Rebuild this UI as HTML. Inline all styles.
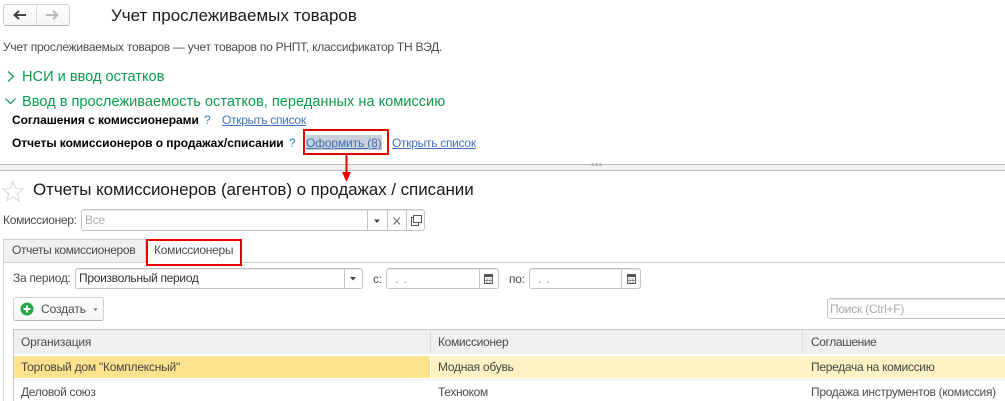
<!DOCTYPE html>
<html lang="ru"><head><meta charset="utf-8"><style>
html,body{margin:0;padding:0;background:#fff}
#p{position:relative;width:1005px;height:401px;overflow:hidden;background:#fff;font-family:"Liberation Sans",sans-serif;font-size:12px;color:#4b4b4b;filter:blur(.3px)}
.t{position:absolute;white-space:nowrap;line-height:16px;letter-spacing:-.28px}
.b{position:absolute;box-sizing:border-box}
.f{position:absolute;box-sizing:border-box;border:1px solid #c4c4c4;border-radius:3px;background:#fff;box-shadow:inset 0 1px 0 #e8e8e8}
.d{position:absolute;width:1px;background:#c4c4c4}
.g{color:#0c9b4e;font-size:14.600px;letter-spacing:0}
.l{color:#3f72b8;text-decoration:underline}
.k{color:#000;font-weight:bold;letter-spacing:-.05px}
.q{color:#2a86c8}
svg{position:absolute;overflow:visible}
</style></head><body><div id="p">
<div class="b" style="left:3px;top:4px;width:67px;height:22px;border:1px solid #d2d2d2;border-bottom-color:#b4b4b4;border-radius:3px;background:linear-gradient(#fff,#f4f4f4)"></div>
<div class="d" style="left:36px;top:5px;height:20px;background:#ddd"></div>
<svg style="left:0;top:0" width="80" height="30"><path d="M26 15H14.500M19 11L14.500 15L19 19" fill="none" stroke="#444" stroke-width="2"/><path d="M46 15H57.500M53 11L57.500 15L53 19" fill="none" stroke="#bbb" stroke-width="2"/></svg>
<div class="t" style="left:111px;top:5px;font-size:17px;line-height:22px;color:#1a1a1a;letter-spacing:0">Учет прослеживаемых товаров</div>
<div class="t" style="left:3px;top:39px;letter-spacing:-.25px">Учет прослеживаемых товаров — учет товаров по РНПТ, классификатор ТН ВЭД.</div>
<svg style="left:0;top:0" width="20" height="120"><path d="M8 71.500L13.500 76.500L8 81.500" fill="none" stroke="#0c9b4e" stroke-width="1.200"/><path d="M5.500 98.500L10.500 103.500L15.500 98.500" fill="none" stroke="#0c9b4e" stroke-width="1.200"/></svg>
<div class="t g" style="left:22px;top:69px">НСИ и ввод остатков</div>
<div class="t g" style="left:22px;top:94px">Ввод в прослеживаемость остатков, переданных на комиссию</div>
<div class="t k" style="left:12px;top:112px">Соглашения с комиссионерами</div>
<div class="t q" style="left:204px;top:112px">?</div>
<div class="t l" style="left:222px;top:112px">Открыть список</div>
<div class="t k" style="left:12px;top:135px">Отчеты комиссионеров о продажах/списании</div>
<div class="t q" style="left:289px;top:135px">?</div>
<div class="b" style="left:306px;top:135px;width:76px;height:15px;background:#c9d0da"></div>
<div class="t l" style="left:306px;top:135px;letter-spacing:-.15px">Оформить (8)</div>
<div class="b" style="left:303px;top:129px;width:86px;height:26px;border:2px solid #e60000"></div>
<div class="t l" style="left:392px;top:135px">Открыть список</div>
<div class="b" style="left:0;top:164px;width:1005px;height:7px;background:#f2f2f2;border-top:1px solid #bdbdbd;border-bottom:1px solid #bdbdbd"></div>
<div class="t" style="left:591px;top:161px;font-size:10px;line-height:10px;letter-spacing:.4px;color:#aaa">•••</div>
<svg style="left:335px;top:150px" width="24" height="36"><path d="M11.500 5V24" stroke="#f00000" stroke-width="2"/><path d="M7 22H16L11.500 32Z" fill="#f00000"/></svg>
<svg style="left:2px;top:180px" width="22" height="22"><path d="M11 1.500L13.700 8.500L21 9L15.300 13.700L17.200 21L11 17L4.800 21L6.700 13.700L1 9L8.300 8.500Z" fill="#fff" stroke="#d8d8d8" stroke-width="1"/></svg>
<div class="t" style="left:33px;top:179px;font-size:17px;line-height:22px;color:#1a1a1a;letter-spacing:-.06px">Отчеты комиссионеров (агентов) о продажах / списании</div>
<div class="t" style="left:3px;top:212px;letter-spacing:-.3px">Комиссионер:</div>
<div class="f" style="left:81px;top:209px;width:344px;height:22px"></div>
<div class="t" style="left:85px;top:212px;color:#b0b0b0">Все</div>
<div class="d" style="left:367px;top:210px;height:20px"></div><div class="d" style="left:387px;top:210px;height:20px"></div><div class="d" style="left:406px;top:210px;height:20px"></div>
<svg style="left:360px;top:205px" width="70" height="30"><path d="M14 14.500H20L17 18Z" fill="#444"/><path d="M33.500 12.500L40 19.500M40 12.500L33.500 19.500" stroke="#666" stroke-width="1"/><path d="M53 12.500H51.500V20.500H58.500V17.500M53.500 10.500H61.500V17.500H53.500Z" fill="none" stroke="#555"/></svg>
<div class="b" style="left:3px;top:239px;width:143px;height:24px;background:#f0f0f0;border:1px solid #cfcfcf;border-bottom:0"></div>
<div class="t" style="left:12px;top:242px;letter-spacing:-.35px">Отчеты комиссионеров</div>
<div class="b" style="left:3px;top:262px;width:1002px;height:1px;background:#cfcfcf"></div>
<div class="b" style="left:3px;top:262px;width:1px;height:139px;background:#d8d8d8"></div>
<div class="b" style="left:146px;top:239px;width:96px;height:27px;background:#fff;border:2px solid #e60000"></div>
<div class="t" style="left:154px;top:242px">Комиссионеры</div>
<div class="t" style="left:13px;top:270px;letter-spacing:-.3px">За период:</div>
<div class="f" style="left:75px;top:268px;width:288px;height:21px"></div>
<div class="d" style="left:344px;top:269px;height:19px"></div>
<div class="t" style="left:79px;top:270px;color:#333;letter-spacing:-.3px">Произвольный период</div>
<svg style="left:0;top:260px" width="1005" height="30"><path d="M350 17H356L353 20.500Z" fill="#444"/></svg>
<div class="t" style="left:373px;top:271px">с:</div>
<div class="f" style="left:386px;top:268px;width:113px;height:21px"></div>
<div class="d" style="left:479px;top:269px;height:19px"></div>
<div class="t" style="left:395px;top:271px;letter-spacing:1px;color:#888">. .</div>
<div class="t" style="left:509px;top:271px">по:</div>
<div class="f" style="left:529px;top:268px;width:112px;height:21px"></div>
<div class="d" style="left:621px;top:269px;height:19px"></div>
<div class="t" style="left:538px;top:271px;letter-spacing:1px;color:#888">. .</div>
<svg style="left:0;top:260px" width="1005" height="30"><g fill="#fff" stroke="#555"><rect x="484.500" y="14.500" width="8" height="9"/><rect x="627.500" y="14.500" width="8" height="9"/></g><path d="M484 14H493V17H484ZM627 14H636V17H627Z" fill="#555"/><path d="M487 18V23M490 18V23M484.500 20.500H492.500M630 18V23M633 18V23M627.500 20.500H635.500" stroke="#777" stroke-width=".800"/></svg>
<div class="b" style="left:13px;top:297px;width:91px;height:24px;border:1px solid #d2d2d2;border-bottom-color:#b4b4b4;border-radius:3px;background:linear-gradient(#fff,#f5f5f5)"></div>
<svg style="left:0;top:295px" width="110" height="30"><circle cx="27" cy="14" r="6.500" fill="#28a745"/><path d="M27 10.500V17.500M23.500 14H30.500" stroke="#fff" stroke-width="2"/><path d="M93.500 13.500H97.500L95.500 16Z" fill="#666"/></svg>
<div class="t" style="left:41px;top:301px;letter-spacing:-.1px">Создать</div>
<div class="f" style="left:827px;top:298px;width:190px;height:21px"></div>
<div class="t" style="left:830px;top:301px;color:#aaa;letter-spacing:-.25px">Поиск (Ctrl+F)</div>
<div class="b" style="left:13px;top:329px;width:992px;height:72px;border-top:1px solid #c8c8c8;border-left:1px solid #c8c8c8"></div>
<div class="b" style="left:14px;top:330px;width:991px;height:24px;background:#f0f0f0"></div>
<div class="b" style="left:14px;top:356px;width:416px;height:22px;background:#ffe28d"></div>
<div class="b" style="left:431px;top:356px;width:574px;height:22px;background:#fff2c4"></div>
<div class="b" style="left:14px;top:379px;width:991px;height:1px;background:#eee"></div>
<div class="d" style="left:430px;top:330px;height:24px;background:#dcdcdc"></div>
<div class="d" style="left:802px;top:330px;height:24px;background:#dcdcdc"></div>
<div class="t" style="left:21px;top:334px;letter-spacing:-.2px">Организация</div>
<div class="t" style="left:438px;top:334px;letter-spacing:-.33px">Комиссионер</div>
<div class="t" style="left:811px;top:334px;letter-spacing:-.4px">Соглашение</div>
<div class="t" style="left:21px;top:359px;color:#444;letter-spacing:-.22px">Торговый дом "Комплексный"</div>
<div class="t" style="left:438px;top:359px;color:#444;letter-spacing:-.25px">Модная обувь</div>
<div class="t" style="left:811px;top:359px;color:#444;letter-spacing:-.3px">Передача на комиссию</div>
<div class="t" style="left:21px;top:384px;letter-spacing:-.33px">Деловой союз</div>
<div class="t" style="left:438px;top:384px;letter-spacing:-.35px">Техноком</div>
<div class="t" style="left:811px;top:384px;letter-spacing:-.3px">Продажа инструментов (комиссия)</div>
</div></body></html>
